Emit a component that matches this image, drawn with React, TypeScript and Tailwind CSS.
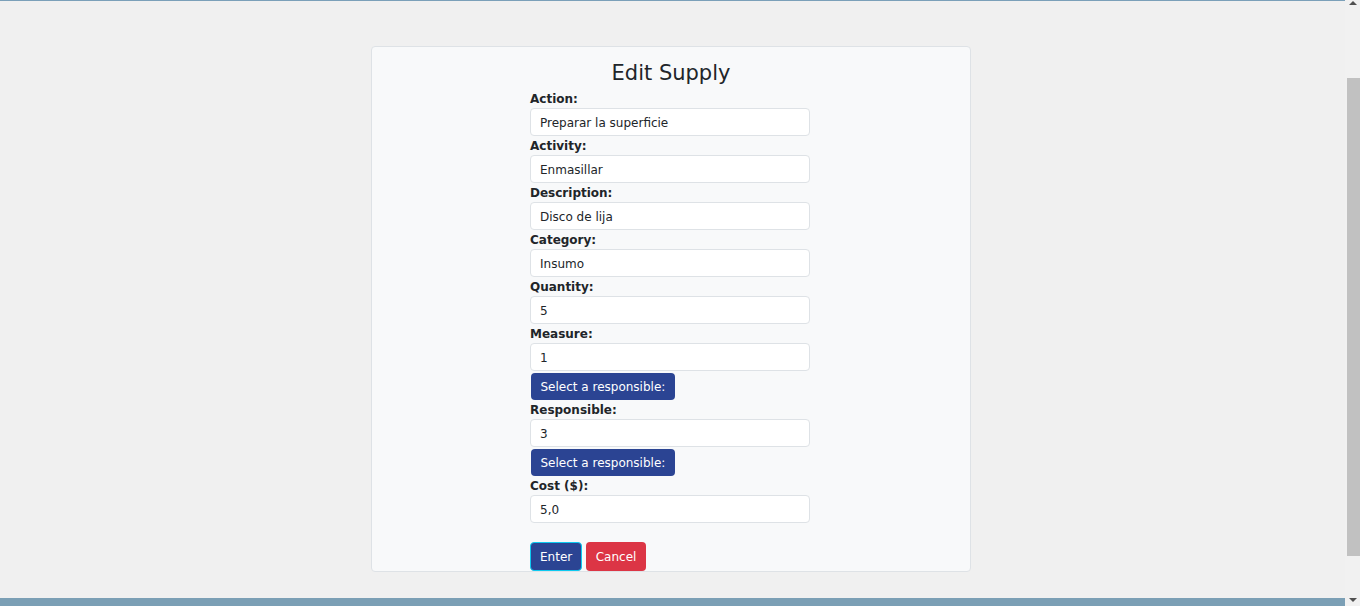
const fields = [
  { label: "Action:", value: "Preparar la superficie" },
  { label: "Activity:", value: "Enmasillar" },
  { label: "Description:", value: "Disco de lija" },
  { label: "Category:", value: "Insumo" },
  { label: "Quantity:", value: "5" },
  { label: "Measure:", value: "1", picker: true },
  { label: "Responsible:", value: "3", picker: true },
  { label: "Cost ($):", value: "5,0" },
];

function Field({ label, value, picker }: { label: string; value: string; picker?: boolean }) {
  return (
    <div className="flex flex-col">
      <label className="block h-[19px] pt-[1px] text-[12px] leading-[18px] font-bold text-[#212529]">{label}</label>
      <input
        readOnly
        value={value}
        className="h-[28px] w-full rounded-[4px] border border-[#dee2e6] bg-white px-[9px] pt-[2px] text-[12px] text-[#212529] outline-none"
      />
      {picker && (
        <div>
          <button className="mt-[2px] ml-px h-[27px] rounded-[4px] bg-[#2b4493] px-[9.5px] text-[12px] text-white">
            Select a responsible:
          </button>
        </div>
      )}
    </div>
  );
}

function Scrollbar() {
  return (
    <div className="flex h-full w-[15px] flex-col bg-[#f1f1f1]">
      <div className="flex h-[15px] justify-center pt-[1px]">
        <svg width="8" height="4" viewBox="0 0 8 4">
          <polygon points="4,0 8,4 0,4" fill="#505050" />
        </svg>
      </div>
      <div className="h-[63px]" />
      <div className="ml-[2px] h-[478px] bg-[#c1c1c1]" />
      <div className="flex-1" />
      <div className="flex h-[15px] justify-center pt-[7px]">
        <svg width="8" height="4" viewBox="0 0 8 4">
          <polygon points="0,0 8,0 4,4" fill="#505050" />
        </svg>
      </div>
    </div>
  );
}

export default function App() {
  return (
    <div className="flex h-[606px] overflow-hidden bg-[#f0f0f0] font-['DejaVu_Sans',sans-serif]">
      <div className="flex flex-1 flex-col">
        <div className="h-px bg-[#7ba0b9]" />
        <div className="flex flex-1 pt-[45px] pl-[371px]">
          <div className="h-[526px] w-[600px] rounded-[4px] border border-[#dee2e6] bg-[#f8f9fa]">
            <h3 className="pt-[14px] text-center text-[21px] leading-[25px] text-[#212529]">Edit Supply</h3>
            <form className="mt-[3px] ml-[158px] w-[280px]">
              {fields.map((f) => (
                <Field key={f.label} {...f} />
              ))}
              <div className="mt-[19px] flex gap-[4px]">
                <button
                  type="button"
                  className="h-[29px] rounded-[4px] border border-[#0dcaf0] bg-[#2b4493] px-[9px] text-[12px] text-white"
                >
                  Enter
                </button>
                <button type="button" className="h-[29px] rounded-[4px] bg-[#dc3545] px-[9.5px] text-[12px] text-white">
                  Cancel
                </button>
              </div>
            </form>
          </div>
        </div>
        <div className="h-[8px] bg-[#7b9fb5]" />
      </div>
      <Scrollbar />
    </div>
  );
}
